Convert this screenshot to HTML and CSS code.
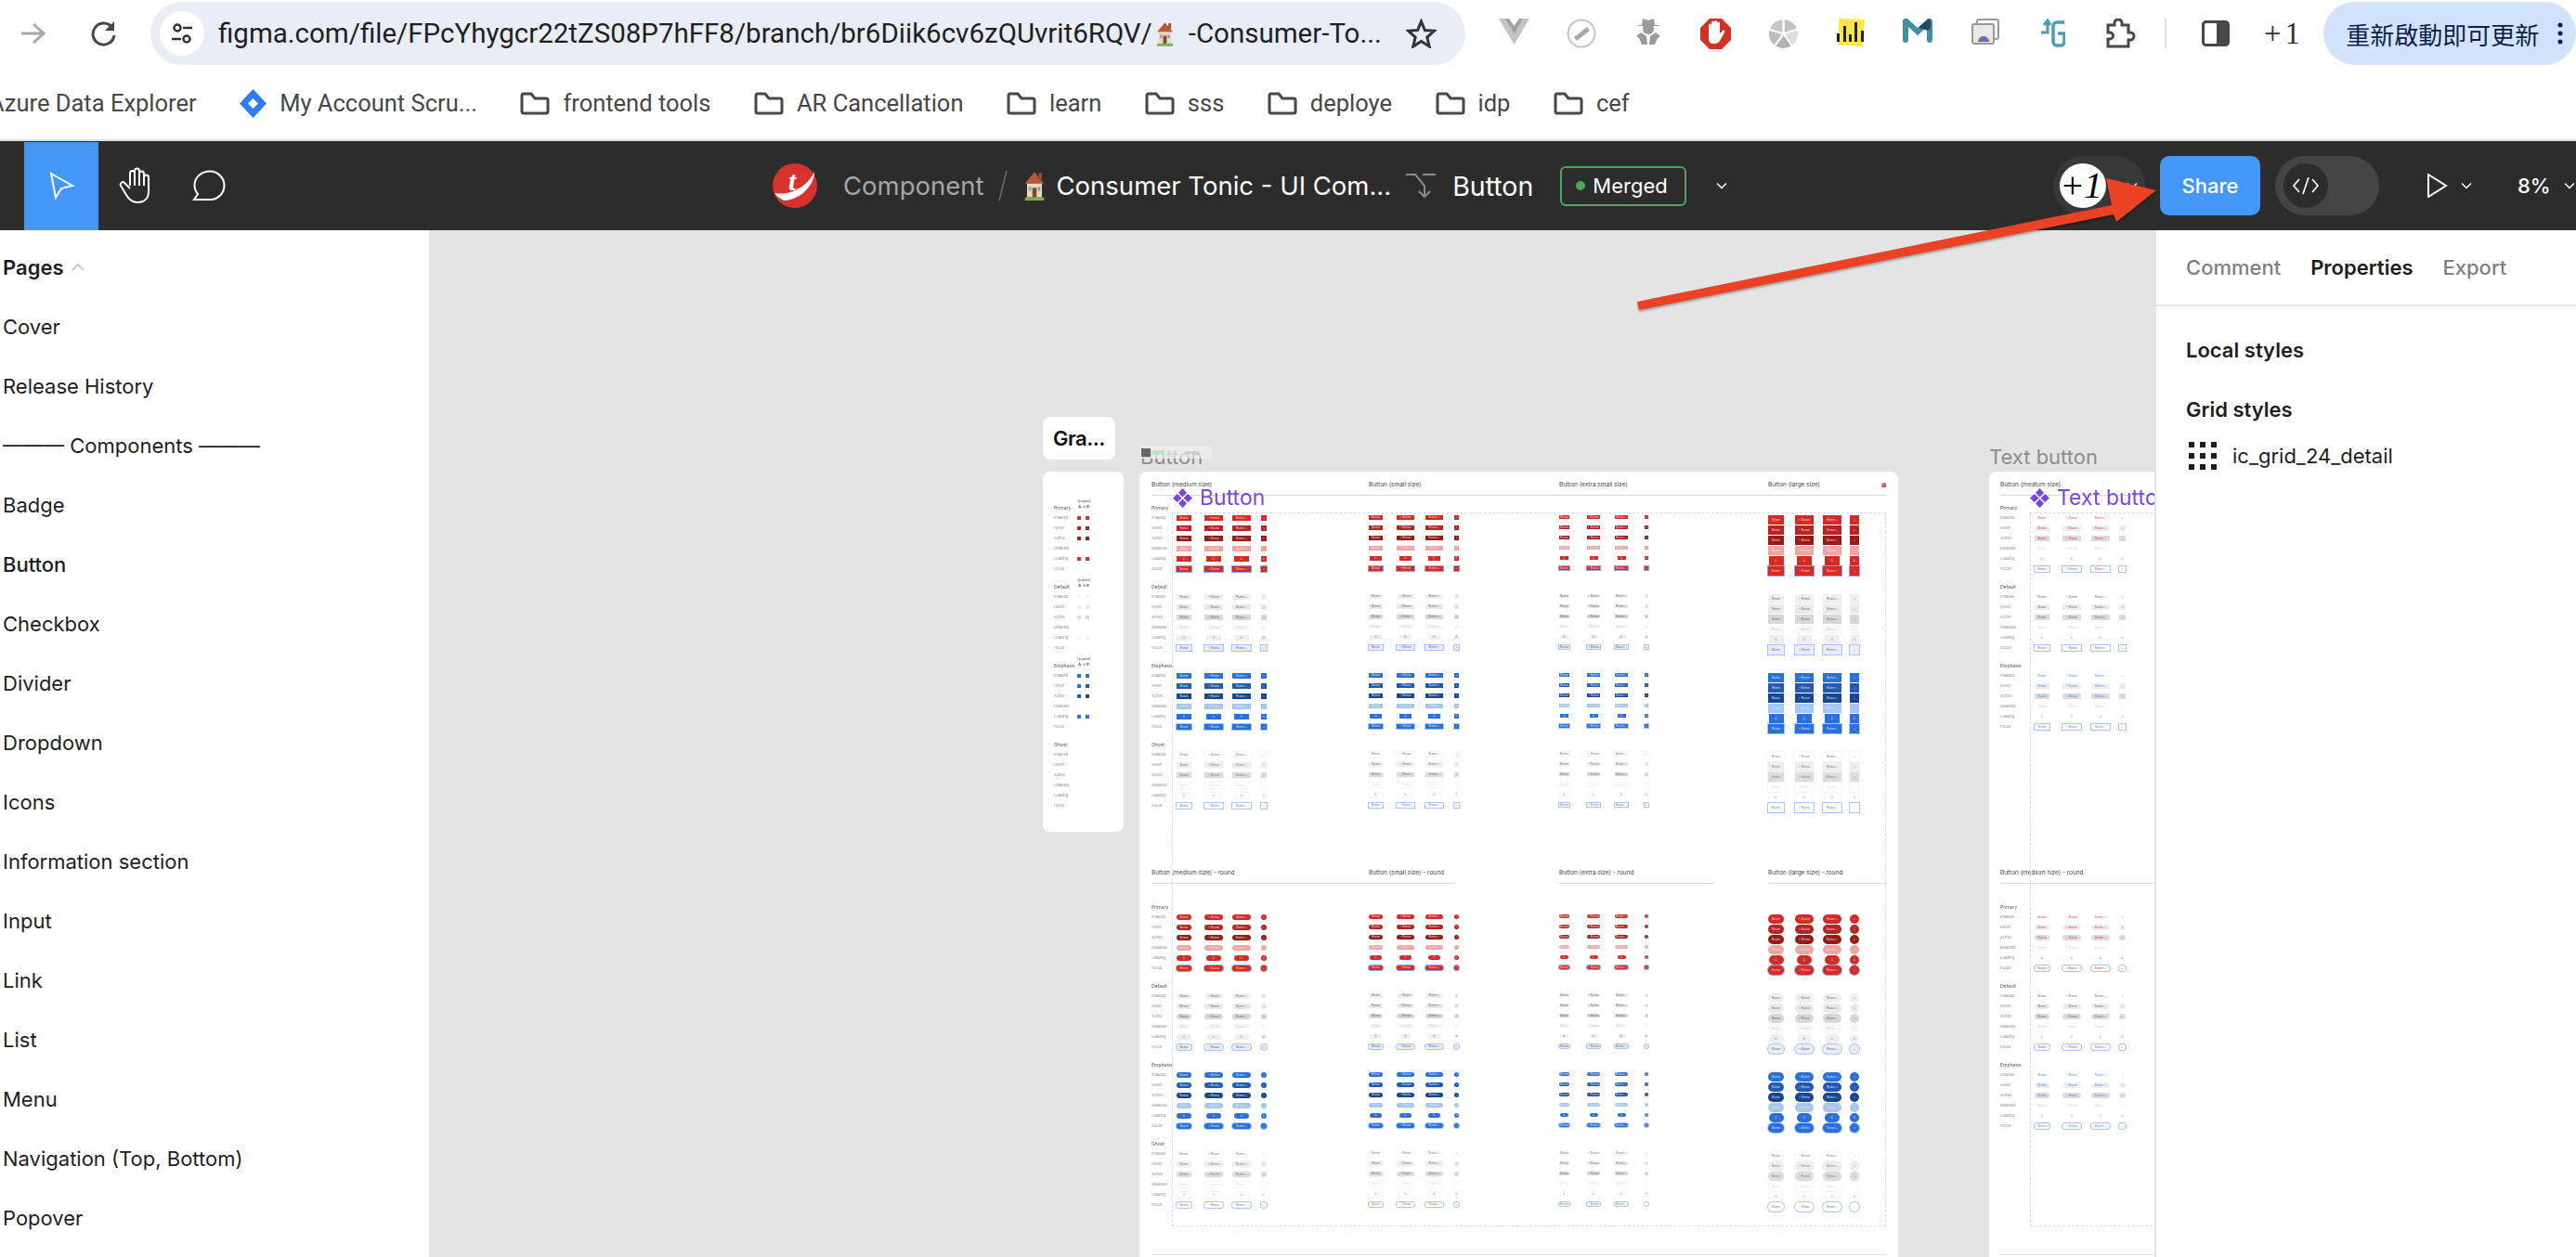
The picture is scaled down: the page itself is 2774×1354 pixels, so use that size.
FILE: index.html
```html
<html lang="en">
<head>
  <title>Consumer Tonic - UI Component - Figma</title>
  <meta charset="utf-8">
  <link rel="stylesheet" href="styles.css">
</head>
<body>

<svg class="defs" width="0" height="0">
  <symbol id="house" viewBox="0 0 20 28">
    <path d="M10 1 19 12H1z" fill="#b8583a"/>
    <rect x="14" y="2" width="3" height="6" fill="#9c4a30"/>
    <rect x="3" y="12" width="14" height="13" fill="#ecd9b6"/>
    <rect x="8" y="16" width="4" height="9" fill="#7a4a2a"/>
    <rect x="4.5" y="15" width="2.5" height="4" fill="#6fa8d8"/>
    <rect x="13" y="15" width="2.5" height="4" fill="#6fa8d8"/>
    <rect x="1" y="25" width="18" height="3" fill="#7fae5a"/>
  </symbol>
  <symbol id="folder" viewBox="0 0 32 25">
    <path d="M2 4a2 2 0 0 1 2-2h8l4 5h12a2 2 0 0 1 2 2v12a2 2 0 0 1-2 2H4a2 2 0 0 1-2-2z" fill="none" stroke="#474747" stroke-width="3"/>
  </symbol>
  <symbol id="chev" viewBox="0 0 12 8">
    <path d="M1 1.5 6 6.500 11 1.500" fill="none" stroke="currentColor" stroke-width="1.500"/>
  </symbol>
  <symbol id="diamonds" viewBox="0 0 21 21">
    <path d="M10.500 0 15 4.800 10.500 9.500 6 4.800zM10.500 11.500 15 16.200 10.500 21 6 16.200zM4.800 6 9.500 10.500 4.800 15 0 10.500zM16.200 6 21 10.500 16.200 15 11.500 10.500z" fill="#7b45e2"/>
  </symbol>
</svg>

<div class="browser-bar">
  <div class="nav">
    <svg class="ic-forward" width="27" height="24" viewBox="0 0 27 24"><path d="M1 12H24M14 2 25 12 14 22" fill="none" stroke="#a8a8a8" stroke-width="3"/></svg>
    <svg class="ic-reload" width="27" height="28" viewBox="0 0 27 28"><path d="M23 8A11.500 11.500 0 1 0 25 16" fill="none" stroke="#474747" stroke-width="3"/><path d="M25 1v10H15z" fill="#474747"/></svg>
  </div>
  <div class="url-bar">
    <span class="site-icon">
      <svg width="26" height="26" viewBox="0 0 26 26"><circle cx="8" cy="7" r="3.500" fill="none" stroke="#333" stroke-width="2.500"/><path d="M14 7H24M2 19H12" stroke="#333" stroke-width="2.500"/><circle cx="18" cy="19" r="3.500" fill="none" stroke="#333" stroke-width="2.500"/></svg>
    </span>
    <span class="url-text">figma.com/file/FPcYhygcr22tZS08P7hFF8/branch/br6Diik6cv6zQUvrit6RQV/</span>
    <svg class="url-house" width="19" height="27"><use href="#house"/></svg>
    <span class="url-text">-Consumer-To...</span>
    <svg class="url-star" width="33" height="32" viewBox="0 0 33 32"><path d="M16.500 3 20.400 12.500 30.500 13.300 22.800 20 25.200 30 16.500 24.600 7.800 30 10.200 20 2.500 13.300 12.600 12.500z" fill="none" stroke="#333" stroke-width="3"/></svg>
  </div>
  <div class="extensions">
    <span class="ext"><svg width="33" height="28" viewBox="0 0 33 28"><path d="M0 0H33L16.500 28z" fill="#c4c4c4"/><path d="M7 0H26L16.500 16z" fill="#a0a0a0"/><path d="M11 0H22L16.500 8z" fill="#fff"/></svg></span>
    <span class="ext"><svg width="32" height="32" viewBox="0 0 32 32"><circle cx="16" cy="16" r="14.500" fill="none" stroke="#c6c6c6" stroke-width="2"/><path d="M8 20 22 9l3 4-14 11z" fill="#a8a8a8"/></svg></span>
    <span class="ext"><svg width="26" height="28" viewBox="0 0 26 28"><path d="M6 7 7 0l6 2 6-2 1 7h4v1H2V7z" fill="#9a9a9a"/><circle cx="13" cy="11" r="6" fill="#9a9a9a"/><path d="M5 15 0 19l3 2 3 7h6l-1-9zM21 15l5 4-3 2-3 7h-6l1-9z" fill="#9a9a9a"/></svg></span>
    <span class="ext"><svg width="33" height="33" viewBox="0 0 33 33"><path d="M10 0H23L33 10V23L23 33H10L0 23V10z" fill="#d63023"/><path d="M9 14V7a1.500 1.500 0 0 1 3 0V4a1.500 1.500 0 0 1 3 0V3.500a1.500 1.500 0 0 1 3 0V5a1.500 1.500 0 0 1 3 0v11l3-3c2-1 3 0 2 2l-5 9c-1 2-3 3-5 3h-2c-3 0-5-2-5-5z" fill="#fff"/></svg></span>
    <span class="ext"><svg width="33" height="33" viewBox="0 0 33 33"><g stroke="#fff" stroke-width="2"><path d="M16.500 16.500V0A16.500 16.500 0 0 1 32.200 11.400z" fill="#c2c2c2"/><path d="M16.500 16.500 32.200 11.400A16.500 16.500 0 0 1 26.200 29.800z" fill="#dedede"/><path d="M16.500 16.500 26.200 29.800A16.500 16.500 0 0 1 6.800 29.800z" fill="#b2b2b2"/><path d="M16.500 16.500 6.800 29.800A16.500 16.500 0 0 1 .8 11.400z" fill="#bcbcbc"/><path d="M16.500 16.500 .8 11.400A16.500 16.500 0 0 1 16.500 0z" fill="#c8c8c8"/></g></svg></span>
    <span class="ext"><svg width="32" height="30" viewBox="0 0 32 30"><path d="M3 0 31 1 29 30 2 28z" fill="#fde54a"/><path d="M1 16h3v9H1zM8 8h3v17H8zM14 17h3v8h-3zM20 4h3v21h-3zM27 13h3v12h-3z" fill="#222"/></svg></span>
    <span class="ext"><svg width="32" height="26" viewBox="0 0 32 26"><path d="M0 3C0 0 4-1 6 1l10 9L26 1c2-2 6-1 6 2v20c0 4-6 4-6 0V9L16 18 6 9v14c0 4-6 4-6 0z" fill="#3f8fa0"/><path d="M17 10 27 1c2-1 3 0 3 2v7l-3 3z" fill="#1f4a68"/></svg></span>
    <span class="ext"><svg width="30" height="28" viewBox="0 0 30 28"><rect x="6" y="1" width="23" height="21" rx="2" fill="#fff" stroke="#9a9a9a" stroke-width="2"/><rect x="1" y="6" width="23" height="21" rx="2" fill="#e8e8e8" stroke="#9a9a9a" stroke-width="2"/><path d="M7 25a6 6 0 0 1 12 0z" fill="#dd4b3e"/><circle cx="13" cy="22" r="3" fill="#3f7fe0"/></svg></span>
    <span class="ext"><svg width="27" height="33" viewBox="0 0 27 33"><path d="M1 15h7V2M11 7 8 2 4 7" fill="none" stroke="#4a9fb5" stroke-width="3"/><path d="M26 4h-8a4 4 0 0 0-4 4v17a4 4 0 0 0 4 4h4a4 4 0 0 0 4-4v-9h-7" fill="none" stroke="#4a9fb5" stroke-width="3.500"/></svg></span>
    <span class="ext"><svg width="34" height="32" viewBox="0 0 34 32"><path d="M4 7h7V5a4 4 0 0 1 8 0v2h7v8h2a4 4 0 0 1 0 8h-2v7H4v-8h2a3.500 3.500 0 0 0 0-7H4z" fill="none" stroke="#474747" stroke-width="3"/></svg></span>
  </div>
  <span class="bar-divider"></span>
  <svg class="ic-side" width="30" height="28" viewBox="0 0 30 28"><rect x="1.500" y="1.500" width="27" height="25" rx="3" fill="none" stroke="#474747" stroke-width="3"/><rect x="16" y="2" width="12" height="24" fill="#474747"/></svg>
  <span class="plus-one">+1</span>
  <div class="update-pill">
    <span>重新啟動即可更新</span>
    <svg width="6" height="26" viewBox="0 0 6 26"><circle cx="3" cy="4" r="2.500" fill="#0b1f4a"/><circle cx="3" cy="13" r="2.500" fill="#0b1f4a"/><circle cx="3" cy="22" r="2.500" fill="#0b1f4a"/></svg>
  </div>
</div>

<div class="bookmarks">
  <span class="bm bm-first">Azure Data Explorer</span>
  <span class="bm">
    <svg width="29" height="31" viewBox="0 0 29 31"><path d="M14.500 0 29 15.500 14.500 31 0 15.500z" fill="#2f7bf0"/><path d="M14.500 10 20 15.500 14.500 21 9 15.500z" fill="#fff"/></svg>
    My Account Scru...
  </span>
  <span class="bm"><svg width="32" height="25"><use href="#folder"/></svg>frontend tools</span>
  <span class="bm"><svg width="32" height="25"><use href="#folder"/></svg>AR Cancellation</span>
  <span class="bm"><svg width="32" height="25"><use href="#folder"/></svg>learn</span>
  <span class="bm"><svg width="32" height="25"><use href="#folder"/></svg>sss</span>
  <span class="bm"><svg width="32" height="25"><use href="#folder"/></svg>deploye</span>
  <span class="bm"><svg width="32" height="25"><use href="#folder"/></svg>idp</span>
  <span class="bm"><svg width="32" height="25"><use href="#folder"/></svg>cef</span>
</div>

<div class="fig-bar">
  <div class="tools">
    <span class="tool tool-active">
      <svg width="27" height="30" viewBox="0 0 27 30"><path d="M2 2 25 15 13 18 7 28z" fill="none" stroke="#fff" stroke-width="2"/></svg>
    </span>
    <span class="tool">
      <svg width="38" height="40" viewBox="0 0 38 40"><path d="M12 20V6.500a2.500 2.500 0 0 1 5 0V4a2.500 2.500 0 0 1 5 0v3a2.500 2.500 0 0 1 5 0v4a2.500 2.500 0 0 1 5 0v15c0 8-5 12-12 12-6 0-9-3-12-8l-6-10a2.500 2.500 0 0 1 4.500-2.500L12 23M17 6v14M22 6v14M27 8v12" fill="none" stroke="#fff" stroke-width="2"/></svg>
    </span>
    <span class="tool">
      <svg width="36" height="34" viewBox="0 0 36 34"><path d="M19 1.500C28 1.500 34.500 9 34.500 16.500 34.500 25 28 32 19 32H2L6 26C3.500 23 2.500 20 2.500 16.500 2.500 8 10 1.500 19 1.500Z" fill="none" stroke="#fff" stroke-width="2"/></svg>
    </span>
  </div>

  <div class="crumbs">
    <svg class="tm-logo" width="48" height="48" viewBox="0 0 48 48">
      <circle cx="24" cy="24" r="24" fill="#d7322e"/>
      <path d="M2 32C18 35 37 26 45 9 45 22 32 39 12 40 8 38 4 35 2 32z" fill="#fff"/>
      <text x="17" y="29" class="tm-t">t</text>
    </svg>
    <span class="crumb-muted">Component</span>
    <svg class="crumb-slash" width="10" height="34" viewBox="0 0 10 34"><path d="M9 1 1 33" stroke="#6a6a6a" stroke-width="1.500"/></svg>
    <svg class="crumb-house" width="26" height="32"><use href="#house"/></svg>
    <span class="crumb">Consumer Tonic - UI Com...</span>
    <svg class="crumb-branch" width="32" height="28" viewBox="0 0 32 28"><path d="M0 2H10L20 14V26M14 20 20 26 26 20M18 2H32" fill="none" stroke="#8c8c8c" stroke-width="2"/></svg>
    <span class="crumb crumb-leaf">Button</span>
    <span class="merged"><i class="merged-dot"></i>Merged</span>
    <svg class="crumb-chev" width="12" height="8"><use href="#chev"/></svg>
  </div>

  <div class="actions">
    <div class="avatars">
      <span class="avatar">+1</span>
      <svg width="12" height="8"><use href="#chev"/></svg>
    </div>
    <span class="share">Share</span>
    <div class="dev-toggle">
      <span class="dev-knob">
        <svg width="32" height="24" viewBox="0 0 32 24"><path d="M9 5 3 12 9 19M23 5 29 12 23 19M19 3 13 21" fill="none" stroke="#fff" stroke-width="1.700"/></svg>
      </span>
    </div>
    <svg class="ic-play" width="22" height="26" viewBox="0 0 22 26"><path d="M1 1 20 13 1 25z" fill="none" stroke="#fff" stroke-width="2"/></svg>
    <svg class="action-chev" width="12" height="8"><use href="#chev"/></svg>
    <span class="zoom-level">8%</span>
    <svg class="action-chev" width="12" height="8"><use href="#chev"/></svg>
  </div>
</div>

<div class="workspace">
  <div class="pages">
    <div class="page-row page-head">Pages
      <svg width="14" height="8" viewBox="0 0 14 8"><path d="M1 7 7 1 13 7" fill="none" stroke="#bdbdbd" stroke-width="1.500"/></svg>
    </div>
    <div class="page-row">Cover</div>
    <div class="page-row">Release History</div>
    <div class="page-row">——— Components ———</div>
    <div class="page-row">Badge</div>
    <div class="page-row page-current">Button</div>
    <div class="page-row">Checkbox</div>
    <div class="page-row">Divider</div>
    <div class="page-row">Dropdown</div>
    <div class="page-row">Icons</div>
    <div class="page-row">Information section</div>
    <div class="page-row">Input</div>
    <div class="page-row">Link</div>
    <div class="page-row">List</div>
    <div class="page-row">Menu</div>
    <div class="page-row">Navigation (Top, Bottom)</div>
    <div class="page-row">Popover</div>
  </div>

  <div class="canvas">
    <div class="frame-title">Gra...</div>
    <div class="frame-name name-button">Button
      <span class="name-chip"><i class="chip-thumb"></i><i class="chip-green"></i><i class="chip-text">Pending</i></span>
    </div>
    <div class="frame-name name-text">Text button</div>

    <div class="sheet sheet-legend" id="legend"></div>

    <div class="sheet sheet-main" id="main">
      <div class="dash"></div>
      <div class="comp-label"><svg width="21" height="21"><use href="#diamonds"/></svg>Button</div>
      <i class="thumb-blob"></i>
    </div>

    <div class="sheet sheet-text" id="text">
      <div class="dash"></div>
      <div class="comp-label"><svg width="21" height="21"><use href="#diamonds"/></svg>Text button</div>
    </div>
  </div>

  <div class="props">
    <div class="tabs">
      <span>Comment</span>
      <span class="tab-active">Properties</span>
      <span>Export</span>
    </div>
    <div class="props-body">
      <div class="props-title">Local styles</div>
      <div class="props-title">Grid styles</div>
      <div class="grid-style">
        <svg width="30" height="30" viewBox="0 0 30 30"><path d="M0 0h6v6H0zM12 0h6v6h-6zM24 0h6v6h-6zM0 12h6v6H0zM12 12h6v6h-6zM24 12h6v6h-6zM0 24h6v6H0zM12 24h6v6h-6zM24 24h6v6h-6z" fill="#1e1e1e"/></svg>
        ic_grid_24_detail
      </div>
    </div>
  </div>
</div>

<svg class="annotation" width="2774" height="1354" viewBox="0 0 2774 1354">
  <path d="M1763 325 2274 221 2268 192 2322 205 2279 239 2276 231 1765 334z" fill="#e94225"/>
</svg>

<script src="sheets.js"></script>
</body>
</html>
```

FILE: styles.css
```css
html, body {
  margin: 0;
  padding: 0;
  height: 1354px;
  overflow: hidden;
  background: #fff;
  font-family: Inter, sans-serif;
  color: #1e1e1e;
}
.defs { position: absolute; }
svg { display: block; flex: none; }

/* browser chrome */
.browser-bar {
  display: flex;
  align-items: center;
  height: 72px;
  font-family: Roboto, sans-serif;
}
.nav {
  width: 162px;
  flex: none;
  display: flex;
  align-items: center;
  gap: 49px;
  padding-left: 22px;
  box-sizing: border-box;
}
.url-bar {
  width: 1416px;
  height: 68px;
  flex: none;
  box-sizing: border-box;
  display: flex;
  align-items: center;
  padding: 0 31px 0 10px;
  background: #e9edf6;
  border-radius: 34px;
}
.site-icon {
  width: 48px;
  height: 48px;
  border-radius: 50%;
  background: #fff;
  display: flex;
  align-items: center;
  justify-content: center;
  margin-right: 15px;
}
.url-text {
  font-size: 29.500px;
  color: #1f1f1f;
  white-space: nowrap;
}
.url-house { margin: 0 16px 0 4px; }
.url-star { margin-left: auto; }
.extensions {
  display: flex;
  margin-left: 16px;
}
.ext {
  width: 72.500px;
  display: flex;
  justify-content: center;
}
.bar-divider {
  width: 2px;
  height: 32px;
  margin-left: 12px;
  background: #d3e3fd;
}
.ic-side { margin-left: 38px; }
.plus-one {
  margin-left: 37px;
  font-family: "Liberation Serif", serif;
  font-size: 33px;
  color: #333;
  letter-spacing: 4px;
}
.update-pill {
  margin-left: 21px;
  width: 272px;
  height: 68px;
  box-sizing: border-box;
  padding-left: 24px;
  display: flex;
  align-items: center;
  gap: 20px;
  background: #d3e3fd;
  border-radius: 34px;
  font-family: "Noto Sans CJK TC", sans-serif;
  font-size: 26px;
  color: #0b1f4a;
  white-space: nowrap;
}

.bookmarks {
  height: 78px;
  display: flex;
  align-items: center;
  gap: 46.500px;
  font-family: Roboto, sans-serif;
  font-size: 25.500px;
  color: #474747;
  border-bottom: 2px solid #e2e2e2;
  white-space: nowrap;
  overflow: hidden;
}
.bm {
  display: flex;
  align-items: center;
  gap: 14px;
}
.bm-first { margin-left: -12px; }

/* figma toolbar */
.fig-bar {
  height: 96px;
  background: #2c2c2c;
  display: flex;
  align-items: center;
  color: #fff;
  font-size: 27.500px;
}
.tools {
  display: flex;
  align-items: center;
  width: 832px;
  padding-left: 26px;
  box-sizing: border-box;
  flex: none;
}
.tool {
  width: 78px;
  height: 95px;
  display: flex;
  align-items: center;
  justify-content: center;
}
.tool-active {
  width: 80px;
  background: #4597f7;
  margin-right: 2px;
}
.crumbs {
  display: flex;
  align-items: center;
  width: 1379px;
  flex: none;
}
.tm-t {
  font-family: "Liberation Serif", serif;
  font-style: italic;
  font-weight: 700;
  font-size: 30px;
  fill: #fff;
}
.crumb-muted { margin-left: 28px; color: #a6a6a6; }
.crumb-slash { margin-left: 15px; }
.crumb-house { margin: 0 11px 0 16px; }
.crumb { white-space: nowrap; }
.crumb-leaf { font-size: 28.500px; }
.crumb-branch { margin: 0 18px 0 16px; }
.merged {
  margin-left: 29px;
  height: 43px;
  width: 136px;
  box-sizing: border-box;
  border: 2px solid #4ba65f;
  border-radius: 6px;
  display: flex;
  align-items: center;
  gap: 8px;
  padding-left: 15px;
  font-size: 22px;
}
.merged-dot {
  width: 10px;
  height: 10px;
  border-radius: 50%;
  background: #4ba65f;
}
.crumb-chev { margin-left: 32px; }
.actions {
  display: flex;
  align-items: center;
  font-size: 22px;
  font-weight: 500;
}
.avatars {
  width: 99px;
  height: 64px;
  box-sizing: border-box;
  border-radius: 32px;
  background: #383838;
  display: flex;
  align-items: center;
  gap: 22px;
  padding-left: 7px;
}
.avatar {
  width: 50px;
  height: 48px;
  border-radius: 50%;
  background: #fff;
  color: #000;
  font: italic 40px/48px "Liberation Serif", serif;
  letter-spacing: -1px;
  white-space: nowrap;
  flex: none;
}
.share {
  margin-left: 16px;
  width: 108px;
  height: 64px;
  border-radius: 10px;
  background: #4597f7;
  display: flex;
  align-items: center;
  justify-content: center;
}
.dev-toggle {
  margin-left: 16px;
  width: 112px;
  height: 64px;
  box-sizing: border-box;
  border-radius: 32px;
  background: #444;
  padding: 8px 9px;
}
.dev-knob {
  width: 48px;
  height: 48px;
  border-radius: 50%;
  background: #2c2c2c;
  display: flex;
  align-items: center;
  justify-content: center;
}
.ic-play { margin-left: 52px; }
.action-chev { margin-left: 14px; }
.zoom-level { margin-left: 49px; }

/* three panes */
.workspace {
  display: flex;
  height: 1106px;
}
.pages {
  width: 462px;
  flex: none;
  box-sizing: border-box;
  padding: 8px 0 0 3px;
  overflow: hidden;
  font-size: 22px;
}
.page-row {
  height: 64px;
  display: flex;
  align-items: center;
  gap: 9px;
  white-space: nowrap;
}
.page-head { font-weight: 600; }
.page-current { font-weight: 500; }

.canvas {
  position: relative;
  flex: 1;
  overflow: hidden;
  background: #e4e4e4;
}
.props {
  width: 454px;
  flex: none;
  box-sizing: border-box;
  border-left: 2px solid #e4e4e4;
  font-size: 22px;
}
.tabs {
  height: 82px;
  box-sizing: border-box;
  border-bottom: 2px solid #e6e6e6;
  padding-left: 32px;
  display: flex;
  align-items: center;
  gap: 32px;
  font-weight: 500;
  color: #7f7f7f;
}
.tab-active { color: #1e1e1e; font-weight: 600; }
.props-body { padding: 15px 0 0 32px; }
.props-title {
  height: 64px;
  display: flex;
  align-items: center;
  font-weight: 600;
}
.grid-style {
  display: flex;
  align-items: center;
  gap: 17px;
  height: 36px;
  padding-left: 3px;
}

/* frames on the canvas */
.frame-title {
  position: absolute;
  left: 661px;
  top: 201px;
  width: 78px;
  height: 46px;
  box-sizing: border-box;
  border-radius: 8px;
  background: #fff;
  padding-left: 11px;
  font-size: 22px;
  font-weight: 600;
  letter-spacing: -0.5px;
  line-height: 46px;
  color: #111;
}
.frame-name {
  position: absolute;
  top: 230px;
  font-size: 22px;
  line-height: 28px;
  color: #8d8d8d;
  white-space: nowrap;
}
.name-button { left: 766px; }
.name-text { left: 1680px; }
.name-chip {
  position: absolute;
  left: 0;
  top: 3px;
  width: 77px;
  height: 13px;
  display: flex;
  align-items: center;
  gap: 2px;
  background: rgba(240, 240, 240, 0.7);
}
.chip-thumb { width: 10px; height: 9px; margin-left: 1px; background: #666; }
.chip-green { width: 13px; height: 5px; background: #bfe6c8; }
.chip-text { margin-left: 20px; font: normal 4px Inter, sans-serif; color: #999; }

.sheet {
  position: absolute;
  top: 260px;
  box-sizing: border-box;
  background: #fff;
  border-radius: 8px;
  filter: blur(0.35px);
}
.sheet-legend { left: 661px; width: 87px; height: 388px; padding: 33px 0 0 12px; }
.sheet-main { left: 765px; width: 817px; height: 900px; padding-left: 13px; }
.sheet-text { left: 1680px; width: 400px; height: 900px; padding-left: 12px; }

.block-top { height: 418px; }
.block-round { height: 425px; }
.heads { display: flex; height: 26px; box-sizing: border-box; padding-top: 8px; margin-bottom: 7px; }
.block-round .heads { margin-bottom: 19px; }
.head {
  flex: none;
  height: 18px;
  box-sizing: border-box;
  border-bottom: 1px solid #d8d8d8;
  font-size: 6.500px;
  line-height: 12px;
  color: #444;
  white-space: nowrap;
}
.sheet-end { border-top: 1px solid #e0e0e0; }
.sheet-main .sheet-end { width: 792px; }

.section { height: 85px; }
.sec-title {
  height: 14px;
  font-size: 5px;
  line-height: 12px;
  color: #555;
  position: relative;
}
.row {
  display: grid;
  height: 11px;
  align-items: start;
  justify-items: start;
  font-size: 4px;
  line-height: 6px;
  color: #8a8a8a;
  white-space: nowrap;
}
.sheet-main .row { grid-template-columns: 27px 30px 30px 31px 116px 30px 31px 31px 113px 30px 30px 32px 133px 29px 30px 29px 12px; }
.sheet-text .row { grid-template-columns: 37px 30px 31px 30px 12px; }
.sheet-legend .row { grid-template-columns: 25px 8.500px 8px; }

.swatch { width: 4px; height: 4px; margin-top: 1px; }
.compare {
  position: absolute;
  left: 25px;
  top: -3px;
  font-size: 3.500px;
  line-height: 5px;
  color: #555;
  text-align: center;
}
.compare b { display: block; font-size: 4px; font-weight: 500; color: #222; }

.btn {
  display: block;
  overflow: hidden;
  text-align: center;
  font-size: 3px;
}
.btn.md { height: 6px; line-height: 6px; }
.btn.sm { height: 5px; line-height: 5px; }
.btn.xs { height: 4px; line-height: 4px; }
.btn.lg { height: 10px; line-height: 10px; }
.round .btn { border-radius: 99px; }

.primary .btn { color: #fbdcdc; background: #d52a25; }
.primary .s1 { background: #b82323; }
.primary .s2 { background: #961c1c; }
.primary .s3 { background: #eba7a5; }
.primary .s5 { box-shadow: 0 0 0 1px #8ba6e6; }
.emphasis .btn { color: #dbe7fb; background: #2b6fdd; }
.emphasis .s1 { background: #2159b5; }
.emphasis .s2 { background: #1b468e; }
.emphasis .s3 { background: #a6c5f0; }
.emphasis .s5 { box-shadow: 0 0 0 1px #a9c6f2; }
.default .btn { color: #666; background: #efefef; }
.default .s1 { background: #eaeaea; }
.default .s2 { background: #d8d8d8; }
.default .s3 { background: #f8f8f8; color: #ccc; }
.default .s5 { background: #e8eef8; box-shadow: 0 0 0 1px #a9c6f2; }
.ghost .btn { color: #777; background: #fff; box-shadow: 0 0 0 .5px #eee; }
.ghost .s1 { background: #eeeeee; }
.ghost .s2 { background: #dddddd; }
.ghost .s3 { color: #ddd; }
.ghost .s5 { box-shadow: 0 0 0 1px #a9c6f2; }

.sheet-text .btn { background: none; box-shadow: none; }
.sheet-text .s1 { background: #eeeeee; }
.sheet-text .s2 { background: #dcdcdc; }
.sheet-text .s5 { box-shadow: 0 0 0 1px #a9c6f2; }
.sheet-text .primary .btn { color: #d8403a; }
.sheet-text .primary .s3 { color: #f3c4c2; }
.sheet-text .default .btn { color: #666; }
.sheet-text .default .s3 { color: #ccc; }
.sheet-text .emphasis .btn { color: #4a86e4; }
.sheet-text .emphasis .s3 { color: #bcd3f4; }

.dash {
  position: absolute;
  left: 35px;
  top: 44px;
  width: 767px;
  height: 767px;
  border: 1px dashed #dcd3fa;
}
.sheet-text .dash { left: 44px; width: 500px; }
.comp-label {
  position: absolute;
  left: 36px;
  top: 15px;
  display: flex;
  align-items: center;
  gap: 8px;
  height: 26px;
  font-size: 23px;
  color: #7b45e2;
  white-space: nowrap;
}
.sheet-text .comp-label { left: 44px; }
.thumb-blob {
  position: absolute;
  left: 799px;
  top: 12px;
  width: 5px;
  height: 5px;
  border-radius: 1px;
  background: linear-gradient(135deg, #e0a0d0, #d52a25);
}

.annotation {
  position: absolute;
  left: 0;
  top: 0;
  filter: drop-shadow(0 2px 1px rgba(0, 0, 0, 0.3));
}
```

FILE: sheets.js
```js
var STATES = ['Enabled', 'Hover', 'Active', 'Disabled', 'Loading', 'Focus'];
var KINDS = ['Button', '+ Button', 'Button +', '+'];

// width of the four button variants in each size, in the order of the columns
var MAIN_SIZES = [
  {cls: 'md', w: [16, 20, 20, 6], load: [16, 16, 16, 6]},
  {cls: 'sm', w: [15, 19, 19, 5], load: [13, 13, 13, 5]},
  {cls: 'xs', w: [11, 14, 14, 4], load: [9, 9, 9, 4]},
  {cls: 'lg', w: [17, 20, 20, 10], load: [16, 16, 16, 10]}
];
var TEXT_SIZES = [{cls: 'md', w: [16, 20, 20, 7], load: [16, 16, 16, 7]}];

var LEGEND = {
  primary: [['#d7302b', '#d7302b'], ['#c22424', '#b82020'], ['#a91e1e', '#8f1a1a'], null, ['#d7302b', '#d7302b'], null],
  default: [['#f7f7f7', '#f2f2f2'], ['#eeeeee', '#e8e8e8'], ['#dddddd', '#d6d6d6'], null, ['#f8f8f8', '#f2f2f2'], null],
  emphasis: [['#2e72de', '#2e72de'], ['#2e72de', '#2159b5'], ['#2159b5', '#1b478f'], null, ['#2e72de', '#2e72de'], null],
  ghost: [null, null, null, null, null, null]
};
var NAMES = {primary: 'Primary', default: 'Default', emphasis: 'Emphasis', ghost: 'Ghost'};

function el(cls, text) {
  var d = document.createElement('div');
  d.className = cls;
  if (text) d.textContent = text;
  return d;
}

function makeButton(size, k, s) {
  var b = document.createElement('span');
  var loading = s === 4;
  b.className = 'btn ' + size.cls + ' s' + s;
  b.style.width = (loading ? size.load[k] : size.w[k]) + 'px';
  if (loading) b.style.marginLeft = (size.w[k] - size.load[k]) / 2 + 'px';
  b.textContent = loading ? '↻' : KINDS[k];
  return b;
}

function makeSection(tone, sizes) {
  var sec = el('section ' + tone);
  sec.appendChild(el('sec-title', NAMES[tone]));
  for (var s = 0; s < STATES.length; s++) {
    var row = el('row');
    row.appendChild(el('row-label', STATES[s]));
    sizes.forEach(function(size) {
      for (var k = 0; k < 4; k++) row.appendChild(makeButton(size, k, s));
    });
    sec.appendChild(row);
  }
  return sec;
}

function makeBlock(cls, heads, tones, sizes) {
  var block = el('block ' + cls);
  var h = el('heads');
  heads.forEach(function(item) {
    var head = el('head', item.t);
    head.style.width = item.w + 'px';
    if (item.gap) head.style.marginRight = item.gap + 'px';
    h.appendChild(head);
  });
  block.appendChild(h);
  tones.forEach(function(tone) {
    block.appendChild(makeSection(tone, sizes));
  });
  return block;
}

function fillLegend() {
  var box = document.getElementById('legend');
  ['primary', 'default', 'emphasis', 'ghost'].forEach(function(tone, n) {
    var sec = el('section');
    var title = el('sec-title', NAMES[tone]);
    if (n < 3) {
      var cmp = el('compare', 'Updated');
      var ab = document.createElement('b');
      ab.textContent = 'A → B';
      cmp.appendChild(ab);
      title.appendChild(cmp);
    }
    sec.appendChild(title);
    STATES.forEach(function(state, s) {
      var row = el('row');
      row.appendChild(el('row-label', state));
      (LEGEND[tone][s] || []).forEach(function(color) {
        var sw = el('swatch');
        sw.style.background = color;
        row.appendChild(sw);
      });
      sec.appendChild(row);
    });
    box.appendChild(sec);
  });
}

function fillMain() {
  var box = document.getElementById('main');
  var tones = ['primary', 'default', 'emphasis', 'ghost'];
  var first = box.firstChild;
  var top = makeBlock('block-top', [
    {t: 'Button (medium size)', w: 234},
    {t: 'Button (small size)', w: 205},
    {t: 'Button (extra small size)', w: 225},
    {t: 'Button (large size)', w: 128}
  ], tones, MAIN_SIZES);
  var round = makeBlock('block-round round', [
    {t: 'Button (medium size) - round', w: 234},
    {t: 'Button (small size) - round', w: 93, gap: 112},
    {t: 'Button (extra size) - round', w: 167, gap: 58},
    {t: 'Button (large size) - round', w: 128}
  ], tones, MAIN_SIZES);
  box.insertBefore(top, first);
  box.insertBefore(round, first);
  box.insertBefore(el('sheet-end'), first);
}

function fillText() {
  var box = document.getElementById('text');
  var tones = ['primary', 'default', 'emphasis'];
  var first = box.firstChild;
  box.insertBefore(makeBlock('block-top', [{t: 'Button (medium size)', w: 400}], tones, TEXT_SIZES), first);
  box.insertBefore(makeBlock('block-round round', [{t: 'Button (medium size) - round', w: 400}], tones, TEXT_SIZES), first);
  box.insertBefore(el('sheet-end'), first);
}

fillLegend();
fillMain();
fillText();
```
